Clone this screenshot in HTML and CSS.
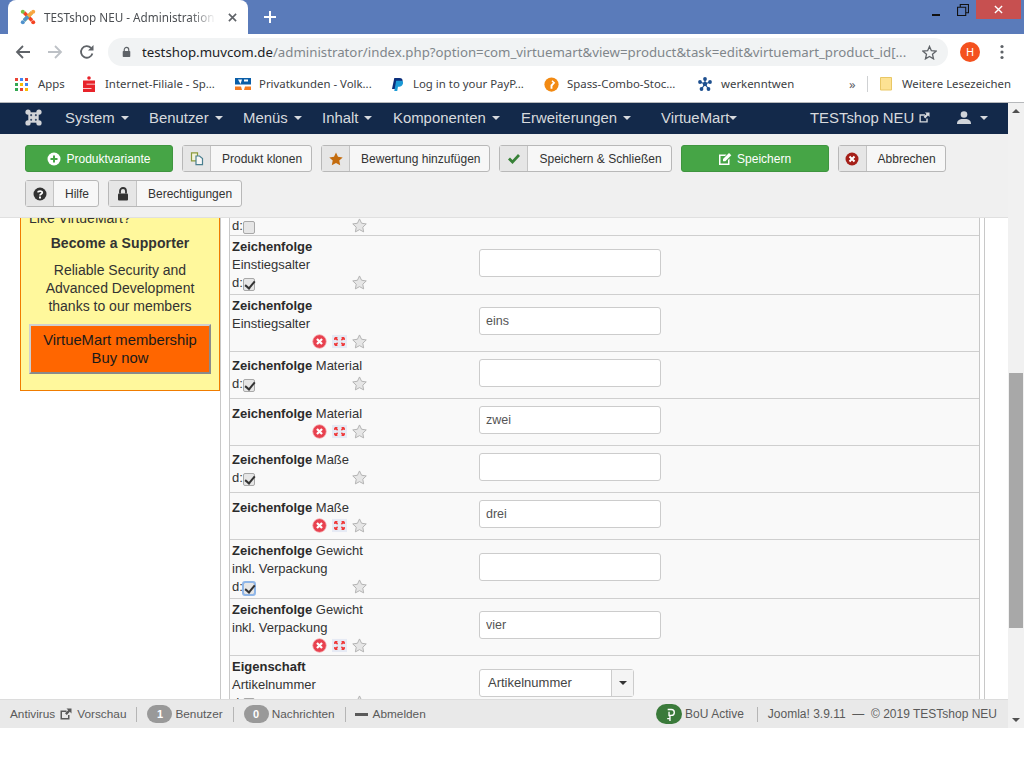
FILE: index.html
```html
<!DOCTYPE html>
<html lang="de">
<head>
<meta charset="utf-8">
<title>TESTshop NEU - Administration</title>
<link rel="stylesheet" href="styles.css">
</head>
<body>
<svg class="sprite" width="0" height="0">
  <defs>
    <symbol id="star" viewBox="0 0 16 16"><path d="M8 1l2.200 4.600 5 .7-3.700 3.500.9 5L8 12.400l-4.400 2.400.9-5L.8 6.300l5-.7z" fill="#e6e6e6" stroke="#b0b0b0" stroke-width="1"/></symbol>
    <symbol id="remove" viewBox="0 0 16 16"><circle cx="8" cy="8" r="7.200" fill="#e8414f" stroke="#f3a9ae" stroke-width=".8"/><path d="M5.300 5.300l5.400 5.400M10.700 5.300l-5.400 5.400" stroke="#fff" stroke-width="2.400"/></symbol>
    <symbol id="move" viewBox="0 0 16 16"><rect x="0" y="1" width="16" height="14" fill="#e6eaf4"/><path d="M3 4l3 2.500M3 4h2.800M3 4v2.400M13 4l-3 2.500M13 4h-2.800M13 4v2.400M3 12l3-2.500M3 12h2.800M3 12V9.600M13 12l-3-2.500M13 12h-2.800M13 12V9.600" stroke="#f03a3a" stroke-width="1.500" fill="none"/></symbol>
    <symbol id="ext" viewBox="0 0 12 12"><path d="M.5 2.500h6V4H2v6h6V7h1.500v4.500h-9z" fill="currentColor"/><path d="M6.500.5h5V5.500L9.800 3.800 6.800 7 5 5.200 8.200 2.200z" fill="currentColor"/></symbol>
  </defs>
</svg>

<header class="browser">
  <div class="tabstrip">
    <div class="tab">
      <svg class="favicon" viewBox="0 0 16 16"><path d="M4 3.500l8 8" stroke="#f44321" stroke-width="3.400"/><path d="M12 3.500l-8 8" stroke="#7ac143" stroke-width="3.400"/><circle cx="2.800" cy="2.800" r="2" fill="#7ac143"/><circle cx="13.200" cy="2.800" r="2" fill="#f9a541"/><circle cx="2.800" cy="13.200" r="2" fill="#5091cd"/><circle cx="13.200" cy="13.200" r="2" fill="#f44321"/><path d="M12 3.500L8 7.500" stroke="#f9a541" stroke-width="3.400"/><path d="M4 11.500L8 7.500" stroke="#5091cd" stroke-width="3.400"/></svg>
      <span class="tab-title">TESTshop NEU - Administration -</span>
      <svg class="tab-close" viewBox="0 0 10 10"><path d="M1 1l8 8M9 1l-8 8" stroke="#5f6368" stroke-width="1.800"/></svg>
    </div>
    <svg class="new-tab" viewBox="0 0 12 12"><path d="M6 0v12M0 6h12" stroke="#fff" stroke-width="2"/></svg>
    <div class="window-controls">
      <svg class="win-min" viewBox="0 0 8 10"><path d="M0 8h8" stroke="#111" stroke-width="2"/></svg>
      <svg class="win-max" viewBox="0 0 11 11"><path d="M.5 3h7.500v7.500H.5zM3 3V.5h7.500V8H8" fill="none" stroke="#111" stroke-width="1"/></svg>
      <div class="win-close"><svg viewBox="0 0 10 10"><path d="M1 1l8 8M9 1l-8 8" stroke="#fff" stroke-width="1.500"/></svg></div>
    </div>
  </div>
  <div class="addressbar">
    <svg class="nav-ic" viewBox="0 0 16 16"><path d="M15 8H2M8 2L2 8l6 6" fill="none" stroke="#5f6368" stroke-width="1.800"/></svg>
    <svg class="nav-ic" viewBox="0 0 16 16"><path d="M1 8h13M8 2l6 6-6 6" fill="none" stroke="#bdc1c6" stroke-width="1.800"/></svg>
    <svg class="nav-ic" viewBox="0 0 16 16"><path d="M13.400 9.500A5.800 5.800 0 1 1 12 3.900" fill="none" stroke="#5f6368" stroke-width="1.800"/><path d="M14.500 1v5.500H9z" fill="#5f6368"/></svg>
    <div class="omnibox">
      <svg class="lock" viewBox="0 0 10 12"><path d="M2.500 5V3.400a2.500 2.500 0 0 1 5 0V5" fill="none" stroke="#5f6368" stroke-width="1.300"/><rect x=".8" y="5" width="8.400" height="6.600" rx=".8" fill="#5f6368"/></svg>
      <span class="url"><span class="url-host">testshop.muvcom.de</span>/administrator/index.php?option=com_virtuemart&amp;view=product&amp;task=edit&amp;virtuemart_product_id[...</span>
      <svg class="url-star" viewBox="0 0 16 16"><path d="M8 1.500l2 4.600 5 .5-3.800 3.300 1.100 4.900L8 12.300l-4.300 2.500 1.100-4.900L1 6.600l5-.5z" fill="none" stroke="#5f6368" stroke-width="1.400"/></svg>
    </div>
    <div class="avatar">H</div>
    <svg class="kebab" viewBox="0 0 4 16"><circle cx="2" cy="2.500" r="1.600" fill="#5f6368"/><circle cx="2" cy="8" r="1.600" fill="#5f6368"/><circle cx="2" cy="13.500" r="1.600" fill="#5f6368"/></svg>
  </div>
  <div class="bookmarks">
    <div class="bm"><svg class="bm-apps" viewBox="0 0 13 13"><g><rect width="3" height="3" fill="#ea4335"/><rect x="5" width="3" height="3" fill="#4285f4"/><rect x="10" width="3" height="3" fill="#ea4335"/><rect y="5" width="3" height="3" fill="#34a853"/><rect x="5" y="5" width="3" height="3" fill="#fbbc05"/><rect x="10" y="5" width="3" height="3" fill="#4285f4"/><rect y="10" width="3" height="3" fill="#34a853"/><rect x="5" y="10" width="3" height="3" fill="#ea4335"/><rect x="10" y="10" width="3" height="3" fill="#fbbc05"/></g></svg><span>Apps</span></div>
    <div class="bm"><svg class="bm-ic" viewBox="0 0 12 16"><circle cx="6" cy="2" r="1.800" fill="#e8232a"/><path d="M0 4.500h12v3.200H3.500v.7H12V16H0v-3h8.500v-.8H0z" fill="#e8232a"/></svg><span>Internet-Filiale - Sp...</span></div>
    <div class="bm"><svg class="bm-vr" viewBox="0 0 16 12"><rect width="16" height="12" fill="#fff"/><rect width="16" height="6.500" fill="#0a5ea8"/><path d="M0 8.500h6l1 3.500H0zM16 8.500h-6l-1 3.500h7z" fill="#f47b20"/><path d="M3 1.500h4L5.500 6zM9 1.500h4v2H9z" fill="#fff"/></svg><span>Privatkunden - Volk...</span></div>
    <div class="bm"><svg class="bm-pp" viewBox="0 0 12 14"><path d="M2.500 0H8c3 0 4 1.800 3.400 4-.6 2.600-2.600 3.600-5 3.600H4.600L3.600 12H0z" fill="#0b2f7c"/><path d="M4.500 3h5c2 0 3 1.200 2.400 3.200C11.400 8.400 9.500 9.500 7.800 9.500H6.500L5.700 14H2.500z" fill="#1c9ad6"/></svg><span>Log in to your PayP...</span></div>
    <div class="bm"><svg class="bm-ic2" viewBox="0 0 16 16"><circle cx="8" cy="8" r="7.600" fill="#f28a13"/><path d="M9 3.500l3 2.500-3 3.500v3H7V8.500L9.500 6 8 4.500z" fill="#fff"/></svg><span>Spass-Combo-Stoc...</span></div>
    <div class="bm"><svg class="bm-wk" viewBox="0 0 14 14"><g fill="#1d4f8f"><circle cx="7" cy="7" r="2.200"/><circle cx="7" cy="2" r="1.900"/><circle cx="2" cy="5" r="1.900"/><circle cx="12" cy="5" r="1.900"/><circle cx="3.500" cy="12" r="1.900"/><circle cx="10.500" cy="12" r="1.900"/></g><path d="M7 2v5M2 5l5 2M12 5L7 7M3.500 12L7 7M10.500 12L7 7" stroke="#1d4f8f" stroke-width="1.200"/></svg><span>werkenntwen</span></div>
    <div class="bm bm-more">»</div>
    <div class="bm-sep"></div>
    <div class="bm"><svg class="bm-folder" viewBox="0 0 12 14"><path d="M.5.500h11v12.500H.5z" fill="#fde293" stroke="#e9c765"/></svg><span>Weitere Lesezeichen</span></div>
  </div>
</header>

<div class="viewport">
  <div class="page">
    <nav class="topnav">
      <svg class="jlogo" viewBox="0 0 18 18"><path d="M3.500 3.500h11v11h-11z" fill="#d2d4d8"/><g fill="#d2d4d8"><circle cx="3.200" cy="3.200" r="2.800"/><circle cx="14.800" cy="3.200" r="2.800"/><circle cx="3.200" cy="14.800" r="2.800"/><circle cx="14.800" cy="14.800" r="2.800"/></g><g fill="#3f4f6b"><circle cx="6.500" cy="6.500" r="1.100"/><circle cx="11.500" cy="6.500" r="1.100"/><circle cx="6.500" cy="11.500" r="1.100"/><circle cx="11.500" cy="11.500" r="1.100"/></g><path d="M8 0h2v2.500H8zM8 15.500h2V18H8zM0 8h2.500v2H0zM15.500 8H18v2h-2.500z" fill="#13294a"/></svg>
      <a class="nav-item">System <i class="caret"></i></a>
      <a class="nav-item">Benutzer <i class="caret"></i></a>
      <a class="nav-item">Menüs <i class="caret"></i></a>
      <a class="nav-item">Inhalt <i class="caret"></i></a>
      <a class="nav-item">Komponenten <i class="caret"></i></a>
      <a class="nav-item">Erweiterungen <i class="caret"></i></a>
      <a class="nav-item">VirtueMart<i class="caret tight"></i></a>
      <a class="nav-item">TESTshop NEU <svg class="nav-ext"><use href="#ext"/></svg></a>
      <a class="nav-item"><svg class="nav-user" viewBox="0 0 14 13"><circle cx="7" cy="3.500" r="3.300" fill="#d0d4da"/><path d="M0 13c0-3.500 2-4.500 4.500-5h5c2.500.5 4.500 1.500 4.500 5z" fill="#d0d4da"/></svg><i class="caret user"></i></a>
    </nav>

    <div class="toolbar">
      <button class="btn btn-green w148"><svg class="ic14" viewBox="0 0 14 14"><circle cx="7" cy="7" r="6.500" fill="#fff"/><path d="M7 3.500v7M3.500 7h7" stroke="#46a546" stroke-width="2"/></svg>Produktvariante</button>
      <button class="btn"><span class="btn-ic"><svg class="ic14" viewBox="0 0 14 14"><path d="M1.500 .8h6v8h-6z" fill="#f4f4dc" stroke="#8a9a3c" stroke-width="1.200"/><path d="M6 4h3.500l3 2.500v6.200H6z" fill="#f7f7f7" stroke="#4a7f8f" stroke-width="1.200"/></svg></span><span class="btn-tx">Produkt klonen</span></button>
      <button class="btn"><span class="btn-ic"><svg class="ic14" viewBox="0 0 14 14"><path d="M7 .5l2 4.300 4.700.6-3.400 3.200.9 4.700L7 11l-4.200 2.300.9-4.700L.3 5.400 5 4.800z" fill="#c46c0e"/></svg></span><span class="btn-tx">Bewertung hinzufügen</span></button>
      <button class="btn"><span class="btn-ic"><svg class="ic14" viewBox="0 0 14 14"><path d="M1 7.500l2-2 2.500 2.500L11 2l2 2-7.500 8z" fill="#378137"/></svg></span><span class="btn-tx">Speichern &amp; Schließen</span></button>
      <button class="btn btn-green w148"><svg class="ic14" viewBox="0 0 14 14"><path d="M1 2.500h7.500L7 4H2.500v7.500H10V8l1.500-1.500V13H1z" fill="#fff"/><path d="M5 7l6-6 2.300 2.300-6 6H5z" fill="#fff"/></svg>Speichern</button>
      <button class="btn"><span class="btn-ic"><svg class="ic14" viewBox="0 0 14 14"><circle cx="7" cy="7" r="6.500" fill="#a51f18"/><path d="M4.500 4.500l5 5M9.500 4.500l-5 5" stroke="#fff" stroke-width="2"/></svg></span><span class="btn-tx">Abbrechen</span></button>
      <button class="btn"><span class="btn-ic"><svg class="ic14" viewBox="0 0 14 14"><circle cx="7" cy="7" r="6.500" fill="#333"/><path d="M4.800 5.300C5 3.800 9.300 3.500 9.300 5.500c0 1.500-2.300 1.500-2.300 3" fill="none" stroke="#fff" stroke-width="1.700"/><rect x="6" y="9.500" width="2" height="2" fill="#fff"/></svg></span><span class="btn-tx">Hilfe</span></button>
      <button class="btn"><span class="btn-ic"><svg class="ic14" viewBox="0 0 14 14"><path d="M4 6.500V4a3 3 0 0 1 6 0v2.500" fill="none" stroke="#333" stroke-width="1.800"/><rect x="2" y="6.500" width="10" height="7" rx="1" fill="#333"/></svg></span><span class="btn-tx">Berechtigungen</span></button>
    </div>

    <main class="content">
      <aside class="sidebar">
        <div class="promo">
          <p class="promo-like">Like VirtueMart?</p>
          <p class="promo-head">Become a Supporter</p>
          <p class="promo-text">Reliable Security and<br>Advanced Development<br>thanks to our members</p>
          <a class="promo-btn">VirtueMart membership<br>Buy now</a>
        </div>
      </aside>
      <section class="panel">
        <div class="fields">
          <div class="row row-clip"><div class="label"><div class="tools d"><span class="dtext">d:<i class="cb"></i></span><svg class="star"><use href="#star"/></svg></div></div></div>

          <div class="row"><div class="label"><b>Zeichenfolge</b><br>Einstiegsalter<div class="tools d"><span class="dtext">d:<i class="cb on"></i></span><svg class="star"><use href="#star"/></svg></div></div><div class="val"><input class="inp"></div></div>
          <div class="row"><div class="label"><b>Zeichenfolge</b><br>Einstiegsalter<div class="tools"><svg class="tool"><use href="#remove"/></svg><svg class="tool"><use href="#move"/></svg><svg class="star"><use href="#star"/></svg></div></div><div class="val"><input class="inp" value="eins"></div></div>

          <div class="row"><div class="label"><b>Zeichenfolge</b> Material<div class="tools d"><span class="dtext">d:<i class="cb on"></i></span><svg class="star"><use href="#star"/></svg></div></div><div class="val"><input class="inp"></div></div>
          <div class="row"><div class="label"><b>Zeichenfolge</b> Material<div class="tools"><svg class="tool"><use href="#remove"/></svg><svg class="tool"><use href="#move"/></svg><svg class="star"><use href="#star"/></svg></div></div><div class="val"><input class="inp" value="zwei"></div></div>

          <div class="row"><div class="label"><b>Zeichenfolge</b> Maße<div class="tools d"><span class="dtext">d:<i class="cb on"></i></span><svg class="star"><use href="#star"/></svg></div></div><div class="val"><input class="inp"></div></div>
          <div class="row"><div class="label"><b>Zeichenfolge</b> Maße<div class="tools"><svg class="tool"><use href="#remove"/></svg><svg class="tool"><use href="#move"/></svg><svg class="star"><use href="#star"/></svg></div></div><div class="val"><input class="inp" value="drei"></div></div>

          <div class="row"><div class="label"><b>Zeichenfolge</b> Gewicht inkl. Verpackung<div class="tools d"><span class="dtext">d:<i class="cb on focus"></i></span><svg class="star"><use href="#star"/></svg></div></div><div class="val"><input class="inp"></div></div>
          <div class="row"><div class="label"><b>Zeichenfolge</b> Gewicht inkl. Verpackung<div class="tools"><svg class="tool"><use href="#remove"/></svg><svg class="tool"><use href="#move"/></svg><svg class="star"><use href="#star"/></svg></div></div><div class="val"><input class="inp" value="vier"></div></div>

          <div class="row"><div class="label"><b>Eigenschaft</b><br>Artikelnummer<div class="tools d"><span class="dtext">d:<i class="cb on"></i></span><svg class="star"><use href="#star"/></svg></div></div><div class="val"><div class="select"><span class="select-tx">Artikelnummer</span><span class="select-arrow"><i class="caret dark"></i></span></div></div></div>
        </div>
      </section>
    </main>

    <footer class="status">
      <span class="st-item">Antivirus <svg class="st-ext"><use href="#ext"/></svg> Vorschau</span>
      <span class="st-sep"></span>
      <span class="st-item"><b class="badge">1</b>Benutzer</span>
      <span class="st-sep"></span>
      <span class="st-item"><b class="badge">0</b>Nachrichten</span>
      <span class="st-sep"></span>
      <span class="st-item"><i class="dash"></i>Abmelden</span>
      <span class="st-spacer"></span>
      <span class="st-item st-right"><b class="bou"><svg viewBox="0 0 12 16"><path d="M4 2.500h4a2.500 2.500 0 0 1 0 6.500H6.500v6M5.500 5v5M3.500 12.500h3" fill="none" stroke="#fff" stroke-width="1.500"/></svg></b>BoU Active</span>
      <span class="st-sep wide"></span>
      <span class="st-item st-right">Joomla! 3.9.11 &nbsp;—&nbsp; © 2019 TESTshop NEU</span>
    </footer>
  </div>
  <div class="scrollbar">
    <i class="sb-up"></i>
    <div class="sb-track"><div class="sb-thumb"></div></div>
    <i class="sb-down"></i>
  </div>
</div>
</body>
</html>
```

FILE: styles.css
```css
* { box-sizing: border-box; }
html, body { margin: 0; padding: 0; }
body {
  width: 1024px;
  height: 768px;
  overflow: hidden;
  background: #fff;
  font-family: "Liberation Sans", Arial, sans-serif;
  font-size: 13px;
  line-height: 18px;
  color: #333;
}
.sprite { position: absolute; }

/* Browser chrome */
.browser { height: 103px; border-bottom: 1px solid #b6b8bb; font-family: "Noto Sans", sans-serif; }
.tabstrip {
  height: 34px;
  background: #5a7bba;
  display: flex;
  align-items: center;
  padding-left: 8px;
}
.tab {
  width: 240px;
  height: 34px;
  background: #fff;
  border-radius: 8px 8px 0 0;
  display: flex;
  align-items: center;
  padding: 0 11px 0 12px;
  font-size: 11.700px;
  color: #4c4f53;
}
.favicon { width: 16px; height: 16px; flex: none; }
.tab-title {
  margin-left: 8px;
  width: 176px;
  white-space: nowrap;
  overflow: hidden;
  -webkit-mask-image: linear-gradient(to right, #000 85%, transparent);
  mask-image: linear-gradient(to right, #000 85%, transparent);
}
.tab-close { width: 9px; height: 9px; margin-left: 12px; flex: none; }
.new-tab { width: 12px; height: 12px; margin-left: 16px; }
.window-controls { margin-left: auto; display: flex; align-self: flex-start; align-items: center; height: 19px; }
.win-min { width: 8px; height: 10px; margin-right: 17px; margin-top: 4px; }
.win-max { width: 12px; height: 12px; margin-right: 7px; margin-top: 1px; }
.win-close { width: 45px; height: 19px; background: #c75050; display: flex; align-items: center; justify-content: center; margin-right: 3px; }
.win-close svg { width: 9px; height: 9px; }

.addressbar { height: 34px; display: flex; align-items: center; padding: 2px 0 0 15px; }
.nav-ic { width: 16px; height: 16px; margin-right: 16px; flex: none; }
.omnibox {
  width: 840px;
  height: 28px;
  margin-left: -3px;
  background: #f1f3f4;
  border-radius: 14px;
  display: flex;
  align-items: center;
  padding: 0 11px 0 14px;
  font-size: 13.260px;
  color: #80868b;
}
.lock { width: 9px; height: 12px; flex: none; }
.url { margin-left: 11px; white-space: nowrap; flex: 1; overflow: hidden; }
.url-host { color: #202124; }
.url-star { width: 15px; height: 15px; flex: none; }
.avatar {
  width: 20px; height: 20px; margin-left: 12px; border-radius: 50%;
  background: #f4511e; color: #fff; font-size: 11px; line-height: 20px; text-align: center;
}
.kebab { width: 4px; height: 16px; margin-left: 20px; }

.bookmarks {
  height: 34px;
  display: grid;
  grid-template-columns: 68px 152px 157px 152px 154px 151px 18px 13px 1fr;
  align-items: center;
  padding: 0 0 2px 15px;
  font-size: 11.400px;
  color: #3c4043;
}
.bm { display: flex; align-items: center; white-space: nowrap; }
.bm-apps { width: 13px; height: 13px; margin-right: 10px; }
.bm-ic { width: 12px; height: 16px; margin-right: 10px; }
.bm-vr { width: 16px; height: 12px; margin-right: 8px; }
.bm-pp { width: 11px; height: 13px; margin-right: 10px; }
.bm-ic2 { width: 15px; height: 15px; margin-right: 8px; }
.bm-wk { width: 14px; height: 14px; margin-right: 9px; }
.bm-more { font-size: 13px; color: #5f6368; }
.bm-sep { width: 1px; height: 16px; background: #cfd1d3; }
.bm-folder { width: 12px; height: 14px; margin-right: 10px; }

/* Viewport */
.viewport { height: 625px; display: flex; }
.page { width: 1008px; display: flex; flex-direction: column; }
.scrollbar { width: 16px; background: #f1f1f1; display: flex; flex-direction: column; align-items: center; }
.sb-up, .sb-down { width: 0; height: 0; border-left: 4px solid transparent; border-right: 4px solid transparent; flex: none; }
.sb-up { border-bottom: 4px solid #505050; margin: 6px 0; }
.sb-down { border-top: 4px solid #505050; margin: 6px 0; }
.sb-track { flex: 1; width: 100%; padding: 254px 1px 0; }
.sb-thumb { height: 255px; background: #a8a8a8; }

/* Joomla nav */
.topnav {
  height: 31px;
  background: #13294a;
  display: grid;
  grid-template-columns: 40px 84px 94px 79px 71px 128px 140px 149px 147px 1fr;
  align-items: center;
  padding: 0 0 2px 25px;
  flex: none;
}
.jlogo { width: 17px; height: 17px; }
.nav-item { color: #d7dade; font-size: 14.900px; white-space: nowrap; display: flex; align-items: center; gap: 4px; }
.caret {
  display: inline-block; width: 0; height: 0; margin-left: 2px; margin-top: 1px;
  border-left: 4px solid transparent; border-right: 4px solid transparent; border-top: 4px solid #d7dade;
}
.caret.tight { margin-left: -4px; }
.caret.user { margin-left: 5px; }
.caret.dark { border-top-color: #333; margin: 0; }
.nav-ext { width: 11px; height: 11px; margin-left: 1px; color: #d7dade; }
.nav-user { width: 14px; height: 13px; }

/* Toolbar */
.toolbar {
  height: 84px;
  flex: none;
  background: #f0f0f0;
  border-bottom: 1px solid #e0e0e0;
  padding: 11px 25px 0;
  display: flex;
  flex-wrap: wrap;
  align-content: flex-start;
  gap: 8px 9px;
}
.btn {
  height: 27px;
  padding: 0;
  display: inline-flex;
  align-items: stretch;
  background: #f7f7f7;
  border: 1px solid #b8b8b8;
  border-radius: 3px;
  font: 12px/18px "Liberation Sans", Arial, sans-serif;
  color: #333;
}
.btn-ic { width: 28px; background: #e6e6e6; border-right: 1px solid #c4c4c4; display: flex; align-items: center; justify-content: center; }
.btn-tx { padding: 0 9px 0 11px; display: flex; align-items: center; }
.ic14 { width: 14px; height: 14px; }
.btn-green {
  background: #46a546; border-color: #3f953f; color: #fff;
  align-items: center; justify-content: center; gap: 5px;
}
.w148 { width: 148px; }

/* Content */
.content { height: 481px; flex: none; display: flex; overflow: hidden; background: #fff; }
.sidebar { width: 220px; flex: none; padding-left: 20px; }
.promo {
  width: 200px;
  height: 182px;
  margin-top: -9px;
  background: #fff89c;
  border: 1px solid #f07c00;
  border-top: 0;
  text-align: center;
  font-size: 14px;
  padding: 0 8px;
}
.promo p { margin: 0; }
.promo-like { text-align: left; }
.promo-head { font-weight: bold; margin-top: 7px !important; letter-spacing: .1px; }
.promo-text { margin-top: 9px !important; }
.promo-btn {
  display: block;
  margin-top: 9px;
  height: 50px;
  padding-top: 5px;
  background: #ff6600;
  border: 2px solid;
  border-color: #d0d0d0 #8a8a8a #8a8a8a #d0d0d0;
  color: #1a1a1a;
  font-size: 14.800px;
}
.panel {
  width: 765px;
  flex: none;
  border-left: 1px solid #c8c8c8;
  border-right: 1px solid #c8c8c8;
  padding: 0 4px 0 8px;
}
.fields { border-left: 1px solid #c8c8c8; border-right: 1px solid #c8c8c8; height: 100%; background: #f9f9f9; overflow: hidden; }
.row {
  display: grid;
  grid-template-columns: 249px 1fr;
  align-items: center;
  min-height: 47px;
  border-bottom: 1px solid #cfcfcf;
}
.row-clip { min-height: 0; height: 18px; align-items: end; }
.label { padding: 2px 0 1px 2px; width: 137px; color: #333; }
.label b { color: #2b2b2b; }
.tools { height: 18px; margin-top: -1px; display: flex; align-items: center; justify-content: flex-end; gap: 5px; }
.tools.d { height: 20px; justify-content: space-between; }
.tools.d .star { margin-top: -2px; }
.row-clip .label { padding: 0 0 0 2px; }
.row-clip .tools.d { height: 18px; margin-bottom: 6px; }
.dtext { display: flex; align-items: center; }
.cb {
  width: 12px; height: 13px; margin-top: 2px;
  background: #e6e6e6; border: 1px solid #a8a8a8; border-radius: 2px; position: relative; display: block;
}
.cb.on::after {
  content: ""; position: absolute; left: 3px; top: 0; width: 4px; height: 8px;
  border-right: 2px solid #333; border-bottom: 2px solid #333; transform: rotate(40deg);
}
.cb.focus { outline: 2px solid #8fb6e8; outline-offset: -1px; }
.tool { width: 15px; height: 15px; }
.star { width: 15px; height: 15px; }
.val { padding: 0 0 4px; }
.inp {
  display: block;
  width: 182px;
  height: 28px;
  padding: 4px 6px;
  background: #fff;
  border: 1px solid #ccc;
  border-radius: 3px;
  font: 12.500px/18px "Liberation Sans", Arial, sans-serif;
  color: #555;
}
.select {
  width: 155px;
  height: 28px;
  background: #fff;
  border: 1px solid #ccc;
  border-radius: 3px;
  display: flex;
  align-items: center;
}
.select-tx { flex: 1; padding-left: 8px; color: #444; }
.select-arrow { width: 22px; height: 100%; background: #f4f4f4; border-left: 1px solid #ccc; display: flex; align-items: center; justify-content: center; }

/* Status bar */
.status {
  height: 29px;
  flex: none;
  background: #e9e9e9;
  border-top: 1px solid #dcdcdc;
  display: flex;
  align-items: center;
  padding: 0 11px 0 10px;
  font-size: 11.800px;
  color: #5a5a5a;
}
.st-item { display: flex; align-items: center; white-space: nowrap; }
.st-right { font-size: 12px; }
.st-ext { width: 12px; height: 12px; margin: 0 5px; color: #5a5a5a; }
.st-sep { width: 1px; height: 15px; background: #b5b5b5; margin: 0 10px; }
.st-sep.wide { margin: 0 10px 0 13px; }
.st-spacer { flex: 1; }
.badge {
  width: 25px; height: 18px; margin-right: 3px; border-radius: 9px;
  background: #999; color: #fff; font-size: 11px; line-height: 18px; text-align: center;
}
.dash { width: 13px; height: 3px; background: #5a5a5a; margin: 0 5px 0 -1px; display: block; }
.bou {
  width: 26px; height: 20px; margin-right: 3px; border-radius: 10px; background: #3a7a3a;
  display: flex; align-items: center; justify-content: center;
}
.bou svg { width: 11px; height: 15px; }
```
